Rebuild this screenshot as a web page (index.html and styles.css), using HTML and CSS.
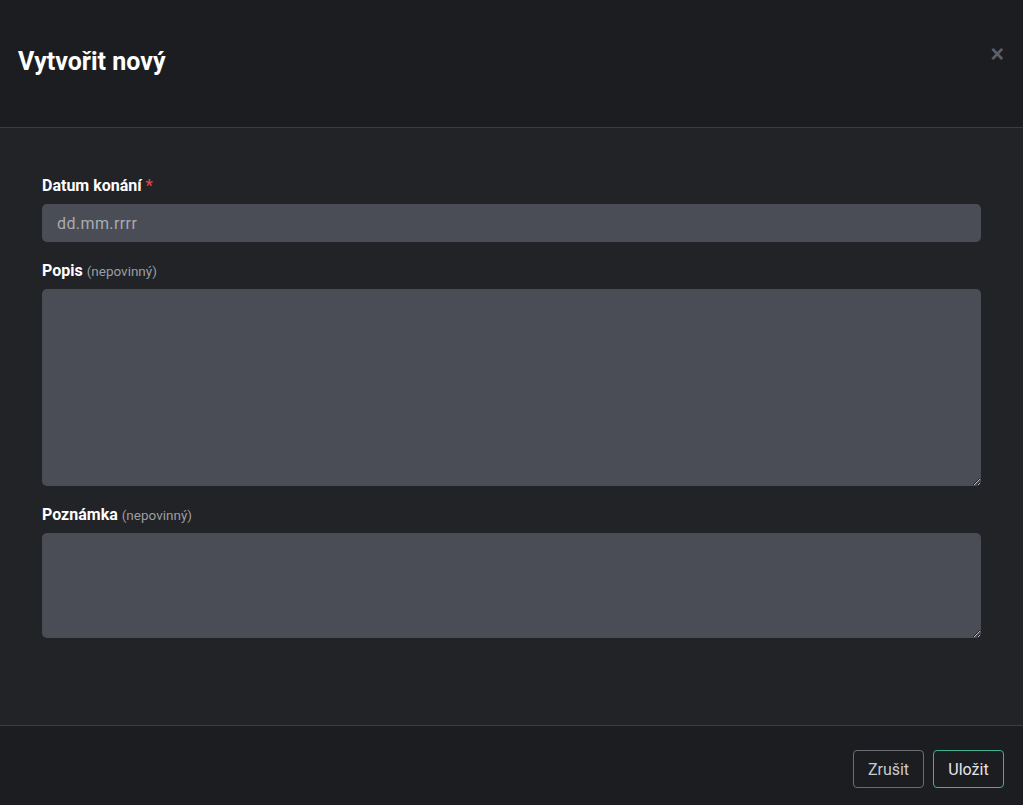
FILE: index.html
```html
<!DOCTYPE html>
<html lang="cs">
<head>
<meta charset="utf-8">
<title>Vytvořit nový</title>
<link rel="stylesheet" href="styles.css">
</head>
<body>
<div class="modal">
  <header class="modal-header">
    <h1 class="modal-title">Vytvořit nový</h1>
    <button class="close" type="button" aria-label="Zavřít">×</button>
  </header>
  <main class="modal-body">
    <div class="field">
      <label class="label">Datum konání <span class="req">*</span></label>
      <div class="input">dd.mm.rrrr</div>
    </div>
    <div class="field">
      <label class="label">Popis <span class="opt">(nepovinný)</span></label>
      <textarea class="textarea tall"></textarea>
    </div>
    <div class="field">
      <label class="label">Poznámka <span class="opt">(nepovinný)</span></label>
      <textarea class="textarea short"></textarea>
    </div>
  </main>
  <footer class="modal-footer">
    <button class="btn btn-cancel" type="button">Zrušit</button>
    <button class="btn btn-save" type="button">Uložit</button>
  </footer>
</div>
</body>
</html>
```
FILE: styles.css
```css
* { box-sizing: border-box; }
html, body { margin: 0; padding: 0; height: 100%; }
body {
  background: #212327;
  font-family: Roboto, "Liberation Sans", sans-serif;
  color: #fff;
}
.modal {
  display: flex;
  flex-direction: column;
  height: 805px;
}
.modal-header {
  height: 128px;
  background: #1c1d21;
  border-bottom: 1px solid #3a3c41;
  display: flex;
  align-items: flex-start;
  justify-content: space-between;
  padding: 44px 18px 0 18px;
}
.modal-title {
  margin: 0;
  font-size: 25px;
  font-weight: 700;
  line-height: 36px;
  color: #fff;
}
.close {
  background: none;
  border: none;
  color: #5f6065;
  font-size: 23px;
  font-weight: 700;
  line-height: 20px;
  padding: 0;
  margin-top: 0;
  margin-right: 1px;
  font-family: "Liberation Sans", sans-serif;
  cursor: pointer;
}
.modal-body {
  flex: 1;
  padding: 47px 42px 0 42px;
  display: flex;
  flex-direction: column;
}
.field {
  display: flex;
  flex-direction: column;
  margin-bottom: 18px;
}
.label {
  font-size: 16px;
  font-weight: 700;
  line-height: 22px;
  margin-bottom: 7px;
  color: #fff;
}
.req { color: #e0454c; font-weight: 700; }
.opt { color: #9b9ea4; font-weight: 400; font-size: 13.5px; }
.input {
  height: 38px;
  background: #4a4d55;
  border-radius: 5px;
  padding: 0 15px;
  display: flex;
  align-items: center;
  font-size: 16px;
  color: #a9acb2;
  letter-spacing: 0.4px;
}
.textarea {
  display: block;
  width: 100%;
  background: #4a4d55;
  border: none;
  border-radius: 5px;
  resize: vertical;
  color: #fff;
  font-family: inherit;
  font-size: 16px;
  padding: 8px 15px;
}
.textarea.tall { height: 197px; }
.textarea.short { height: 105px; }
.modal-footer {
  height: 80px;
  background: #1c1d21;
  border-top: 1px solid #3a3c41;
  display: flex;
  justify-content: flex-end;
  align-items: center;
  gap: 9px;
  padding: 0 19px 0 0;
}
.btn {
  height: 38px;
  padding: 0 13px;
  border-radius: 4px;
  background: transparent;
  font-family: inherit;
  font-size: 16px;
  color: #c8cad0;
  cursor: pointer;
  margin-top: 7px;
}
.btn-cancel { border: 1px solid #6a6d73; width: 71px; }
.btn-save { border: 1px solid #3fb28c; color: #e4e6ea; width: 71px; }
```
